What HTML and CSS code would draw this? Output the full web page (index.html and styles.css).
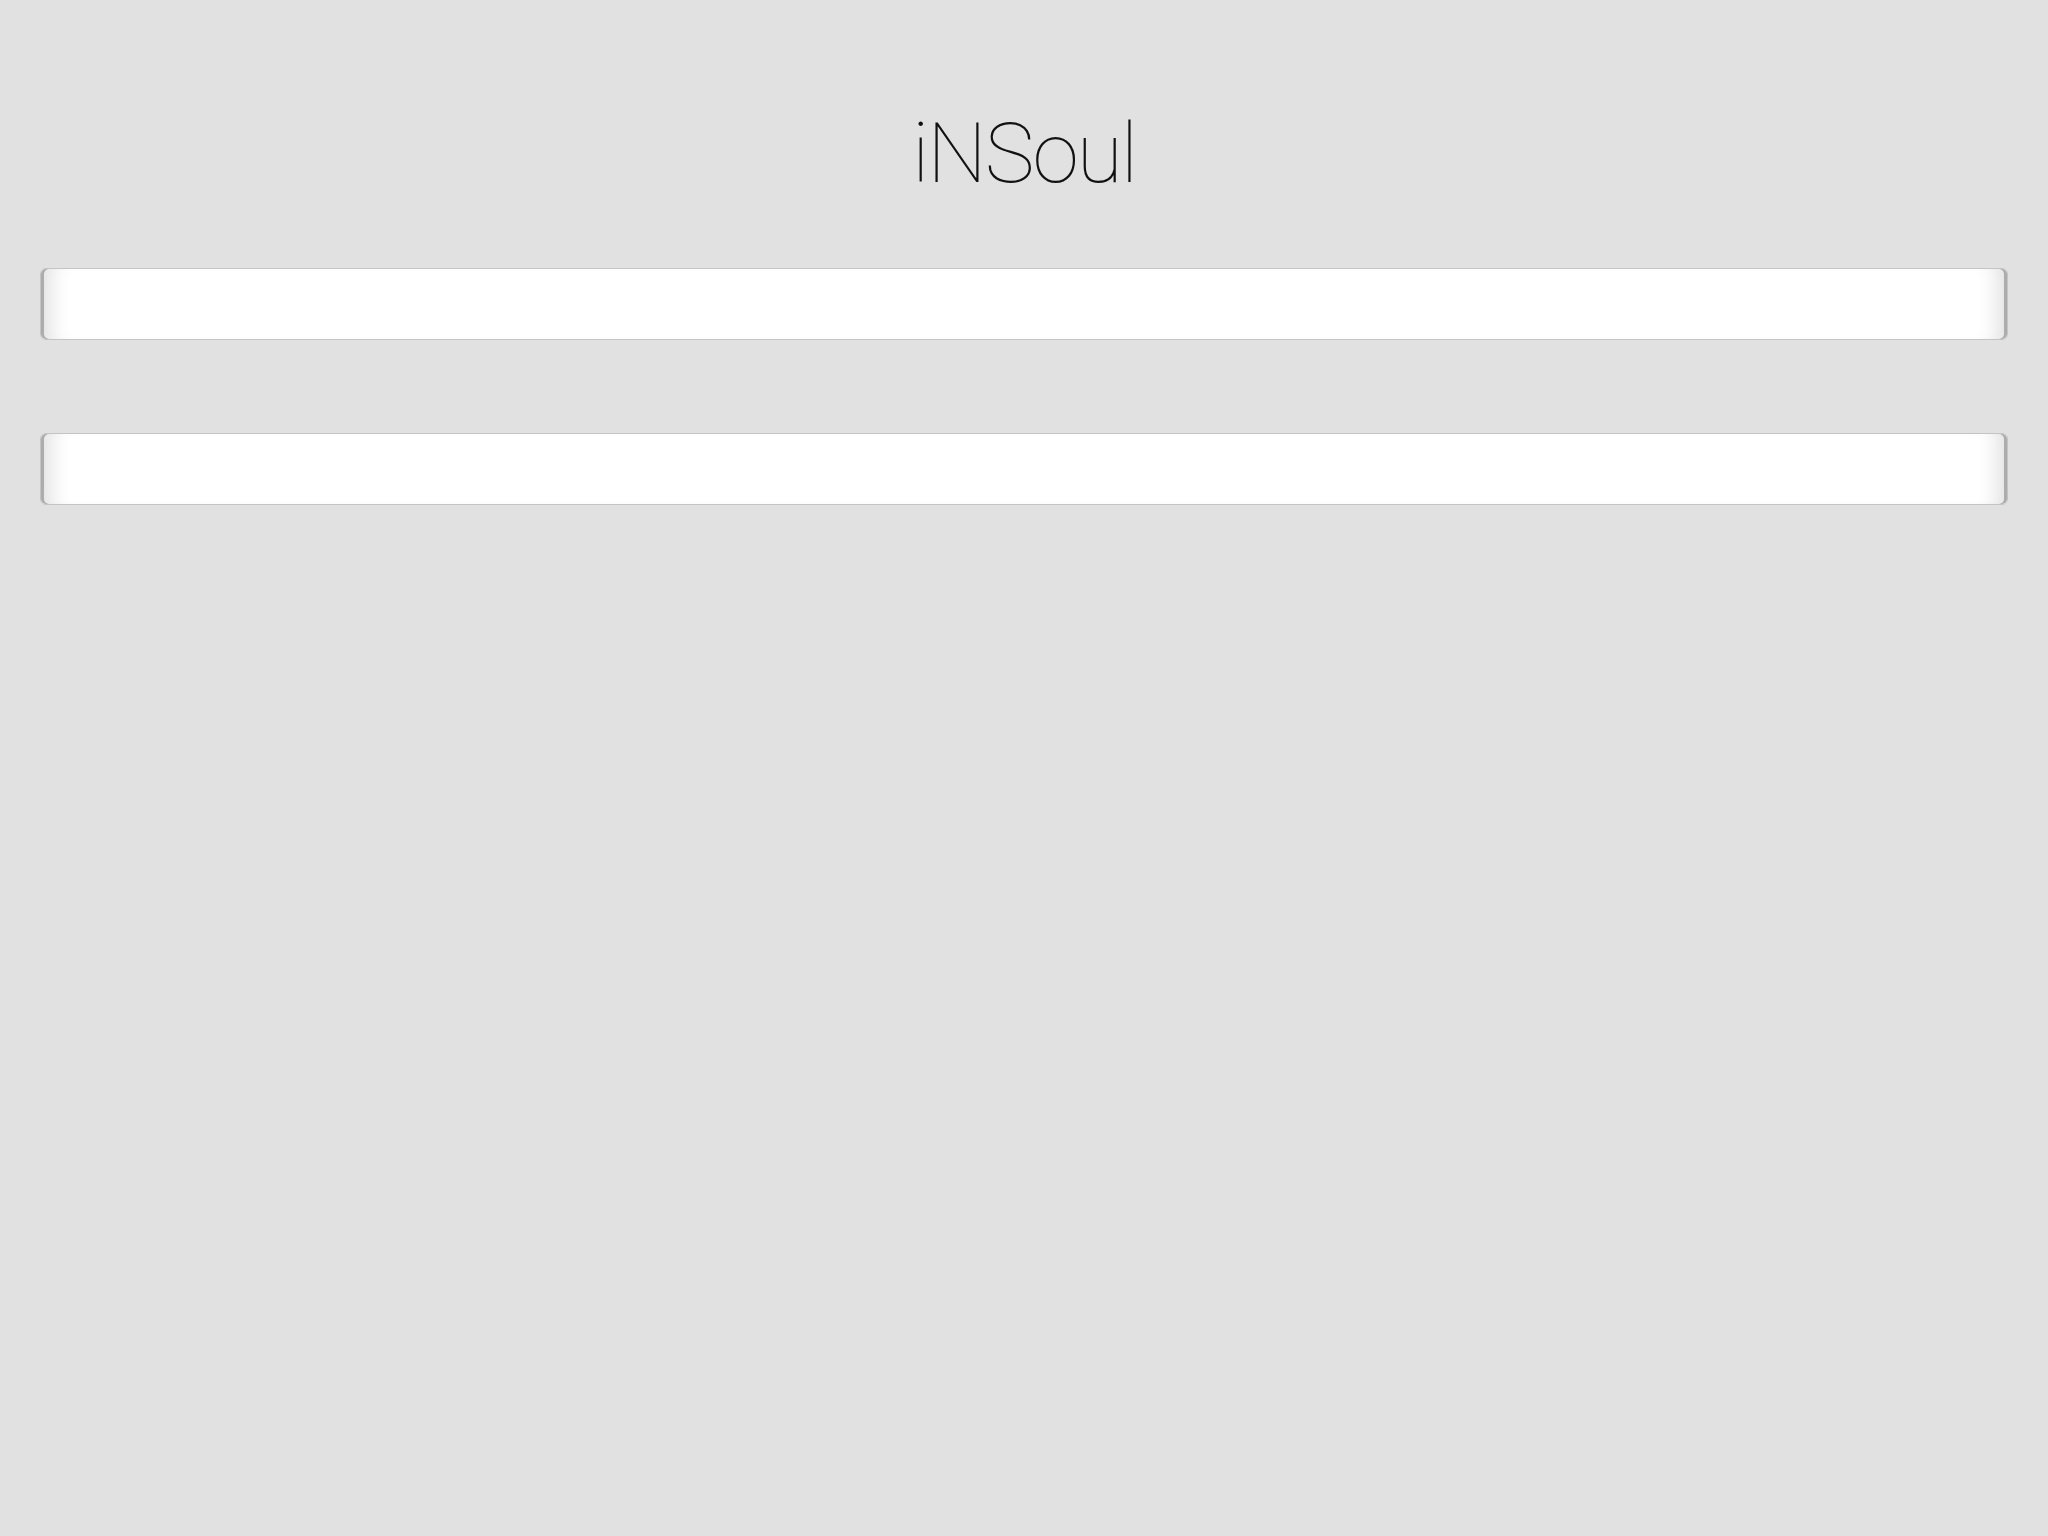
FILE: index.html
```html
<!DOCTYPE html>
<html>
<head>
<meta charset="utf-8">
<title>iNSoul</title>
<link rel="stylesheet" href="styles.css">
</head>
<body>
<main class="page">
  <h1 class="title">iNSoul</h1>
  <div class="fields">
    <div class="field"></div>
    <div class="field"></div>
  </div>
</main>
</body>
</html>
```
FILE: styles.css
```css
html, body {
  margin: 0;
  padding: 0;
  background: #e1e1e1;
  height: 100%;
}
.page {
  padding: 0 40px;
  font-family: Roboto, "Helvetica Neue", "Liberation Sans", sans-serif;
}
.title {
  margin: 0;
  padding-top: 112px;
  height: 164px;
  box-sizing: border-box;
  text-align: center;
  font-weight: 100;
  font-size: 84px;
  line-height: 84px;
  letter-spacing: -2px;
  color: #111;
}
.fields {
  display: flex;
  flex-direction: column;
  gap: 93px;
  padding-top: 104px;
}
.field {
  height: 70px;
  background: #fff;
  border: 1px solid #c4c4c4;
  border-radius: 6px;
  box-shadow:
    inset 3px 0 0 #acacac,
    inset -3px 0 0 #acacac,
    inset 26px 0 20px -16px rgba(0, 0, 0, 0.12),
    inset -26px 0 20px -16px rgba(0, 0, 0, 0.12);
}
```
